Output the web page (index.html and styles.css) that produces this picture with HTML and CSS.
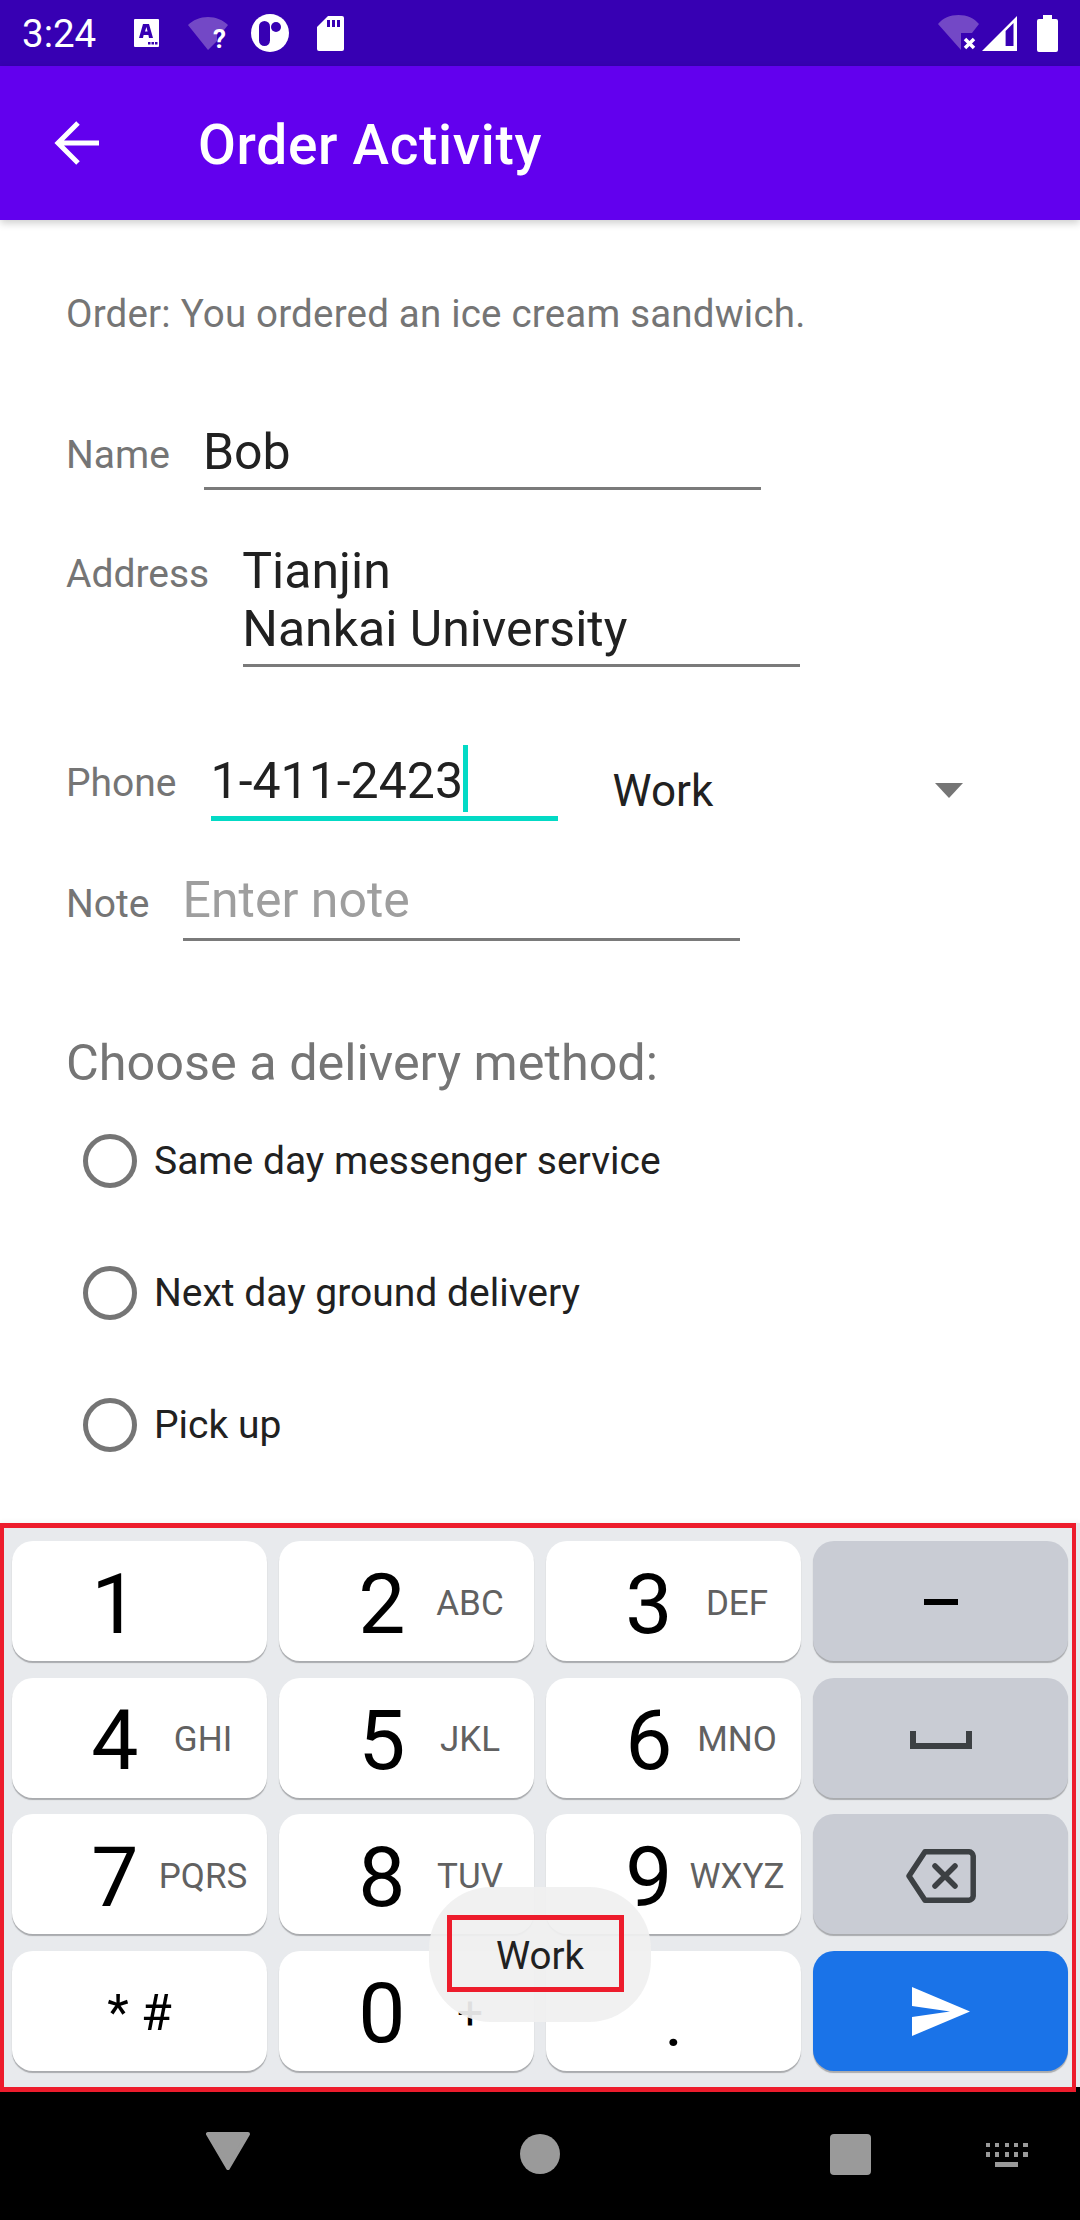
FILE: index.html
```html
<!DOCTYPE html>
<html lang="en">
<head>
<meta charset="utf-8">
<title>Order Activity</title>
<link rel="stylesheet" href="styles.css">
</head>
<body>
<div class="screen">
  <header class="status">
    <span class="time">3:24</span>
    <svg class="si si-a" width="25" height="28" viewBox="0 0 25 28"><path fill="#fff" d="M1 0h23a1 1 0 0 1 1 1v26a1 1 0 0 1-1 1H1a1 1 0 0 1-1-1V1a1 1 0 0 1 1-1z"/><path fill="#3700b3" d="M9 5h6l4 14h-4l-.6-3h-4.800l-.6 3H5zM11 12.500h2.600L12.400 8z"/><rect x="14" y="23" width="2.500" height="2.500" fill="#3700b3"/><rect x="17.500" y="23" width="2.500" height="2.500" fill="#3700b3"/><rect x="21" y="23" width="2.500" height="2.500" fill="#3700b3"/></svg>
    <svg class="si si-w" width="40" height="40" viewBox="0 0 40 40"><path fill="#7348c6" d="M0 8C5 3 12 0 20 0s15 3 20 8l-4 5h-7v11l-9 9z"/><text x="25" y="31" class="q">?</text></svg>
    <svg class="si si-c" width="38" height="38" viewBox="0 0 38 38"><circle cx="19" cy="19" r="19" fill="#fff"/><rect x="8" y="7" width="11" height="25" rx="5.500" fill="#3700b3"/><circle cx="25" cy="13" r="5" fill="#3700b3"/></svg>
    <svg class="si si-s" width="27" height="35" viewBox="0 0 27 35"><path fill="#fff" d="M11 0h14a2 2 0 0 1 2 2v31a2 2 0 0 1-2 2H2a2 2 0 0 1-2-2V11z"/><rect x="10" y="4" width="3" height="7" fill="#3700b3"/><rect x="15" y="4" width="3" height="7" fill="#3700b3"/><rect x="20" y="4" width="3" height="7" fill="#3700b3"/></svg>
    <span class="grow"></span>
    <svg class="si" width="41" height="35" viewBox="0 0 41 35"><path fill="#7348c6" d="M0 9C5 3 12 0 20.500 0S36 3 41 9l-7 9H23v17z"/><path stroke="#fff" stroke-width="3.500" fill="none" d="M27 24l9 9M36 24l-9 9"/></svg>
    <svg class="si si-sig" width="35" height="35" viewBox="0 0 35 35"><path fill="#fff" fill-rule="evenodd" d="M35 0v35H0zM31.500 7l-7.900 8v15h7.900z"/></svg>
    <svg class="si si-bat" width="21" height="37" viewBox="0 0 21 37"><path fill="#fff" d="M6 0h9v4h4a2 2 0 0 1 2 2v29a2 2 0 0 1-2 2H2a2 2 0 0 1-2-2V6a2 2 0 0 1 2-2h4z"/></svg>
  </header>

  <div class="appbar">
    <svg class="back" width="46" height="44" viewBox="0 0 46 44"><path fill="none" stroke="#fff" stroke-width="5" d="M45 22H4M24 2L4 22l20 20"/></svg>
    <h1 class="title">Order Activity</h1>
  </div>

  <main class="content">
    <p class="order">Order: You ordered an ice cream sandwich.</p>

    <div class="field f-name">
      <span class="label">Name</span>
      <div class="input"><span class="val">Bob</span></div>
    </div>

    <div class="field f-addr">
      <span class="label">Address</span>
      <div class="input"><span class="val">Tianjin<br>Nankai University</span></div>
    </div>

    <div class="field f-phone">
      <span class="label">Phone</span>
      <div class="input input-active"><span class="val">1-411-2423</span><span class="caret"></span></div>
      <div class="spinner"><span class="spin-val">Work</span><span class="tri"></span></div>
    </div>

    <div class="field f-note">
      <span class="label">Note</span>
      <div class="input"><span class="val hint">Enter note</span></div>
    </div>

    <h2 class="choose">Choose a delivery method:</h2>
    <div class="radio"><span class="dot"></span><span>Same day messenger service</span></div>
    <div class="radio"><span class="dot"></span><span>Next day ground delivery</span></div>
    <div class="radio"><span class="dot"></span><span>Pick up</span></div>
  </main>

  <section class="kbd-row">
    <div class="kbd">
      <div class="key"><span class="digit">1</span><span class="sub"></span></div>
      <div class="key"><span class="digit">2</span><span class="sub">ABC</span></div>
      <div class="key"><span class="digit">3</span><span class="sub">DEF</span></div>
      <div class="key fn"><span class="minus"></span></div>

      <div class="key"><span class="digit">4</span><span class="sub">GHI</span></div>
      <div class="key"><span class="digit">5</span><span class="sub">JKL</span></div>
      <div class="key"><span class="digit">6</span><span class="sub">MNO</span></div>
      <div class="key fn"><svg class="ic-space" width="62" height="18" viewBox="0 0 62 18"><path fill="none" stroke="#3c4043" stroke-width="6" d="M3 0v15h56V0"/></svg></div>

      <div class="key"><span class="digit">7</span><span class="sub">PQRS</span></div>
      <div class="key"><span class="digit">8</span><span class="sub">TUV</span></div>
      <div class="key"><span class="digit">9</span><span class="sub">WXYZ</span></div>
      <div class="key fn"><svg class="ic-back" width="70" height="54" viewBox="0 0 70 54"><path fill="none" stroke="#3c4043" stroke-width="5.500" stroke-linejoin="round" d="M19 2.800h44a4.500 4.500 0 0 1 4.200 4.200v40a4.500 4.500 0 0 1-4.200 4.200H19L3 27z"/><path fill="none" stroke="#3c4043" stroke-width="5.500" stroke-linecap="round" d="M29 17l20 20M49 17L29 37"/></svg></div>

      <div class="key"><span class="sym">* #</span></div>
      <div class="key"><span class="digit">0</span><span class="sub plus">+</span></div>
      <div class="key"><span class="period">.</span></div>
      <div class="key enter"><svg width="58" height="49" viewBox="0 0 58 49"><path fill="#fff" d="M0 0l58 24.500L0 49V30l38-5.500L0 19z"/></svg></div>
    </div>
    <div class="toast"><div class="toast-box">Work</div></div>
  </section>

  <nav class="navbar">
    <svg width="44" height="38" viewBox="0 0 44 38"><path fill="#9a9a9a" stroke="#9a9a9a" stroke-width="4" stroke-linejoin="round" d="M2 2h40L22 36z"/></svg>
    <svg class="nav-c" width="40" height="40" viewBox="0 0 40 40"><circle cx="20" cy="20" r="20" fill="#9a9a9a"/></svg>
    <svg class="nav-s" width="41" height="41" viewBox="0 0 41 41"><rect width="41" height="41" rx="4" fill="#9a9a9a"/></svg>
    <svg class="nav-k" width="42" height="24" viewBox="0 0 42 24"><g fill="#9a9a9a"><rect x="0" y="0" width="4" height="4"/><rect x="9" y="0" width="4" height="4"/><rect x="19" y="0" width="4" height="4"/><rect x="28" y="0" width="4" height="4"/><rect x="37" y="0" width="5" height="4"/><rect x="0" y="9" width="4" height="5"/><rect x="9" y="9" width="4" height="5"/><rect x="19" y="9" width="4" height="5"/><rect x="28" y="9" width="4" height="5"/><rect x="37" y="9" width="5" height="5"/><rect x="9" y="19" width="23" height="5"/></g></svg>
  </nav>
</div>
</body>
</html>
```
FILE: styles.css
```css
* { box-sizing: border-box; }
html, body { margin: 0; padding: 0; }
body { width: 1080px; height: 2220px; overflow: hidden; background: #fff; font-family: Roboto, "Noto Sans", sans-serif; }
.screen { width: 1080px; height: 2220px; display: flex; flex-direction: column; }

.status { height: 66px; background: #3700b3; display: flex; align-items: flex-start; padding: 0 22px 0 22px; flex: none; overflow: hidden; }
.time { color: #fff; font-size: 38.500px; line-height: 68px; width: 112px; flex: none; }
.si { display: block; flex: none; margin-top: 15px; }
.si-a { margin-top: 19px; margin-right: 29px; }
.si-w { margin-top: 17px; margin-right: 23px; }
.si-c { margin-top: 14px; margin-right: 28px; }
.si-s { margin-top: 16px; }
.si-sig { margin-top: 16px; margin-left: 3px; margin-right: 20px; }
.q { font: 700 26px Roboto, sans-serif; fill: #fff; }
.grow { flex: 1; }

.appbar { height: 154px; background: #6200ee; display: flex; align-items: center; flex: none; box-shadow: 0 3px 8px rgba(0,0,0,.2); position: relative; z-index: 1; }
.back { margin-left: 54px; margin-top: -1px; flex: none; }
.title { margin: 4px 0 0 98px; color: #fff; font-size: 55px; font-weight: 500; line-height: 1; letter-spacing: .69px; }

.content { height: 1303px; flex: none; padding: 0 0 0 66px; color: #757575; }
.order { margin: 0; padding-top: 71px; font-size: 38.500px; line-height: 46px; letter-spacing: .2px; }
.field { display: flex; font-size: 39px; }
.label { line-height: 46px; flex: none; }
.input { border-bottom: 3px solid #7a7a7a; width: 557px; flex: none; }
.val { display: block; color: #212121; font-size: 50px; line-height: 58px; margin-left: -1px; }
.hint { color: #9e9e9e; margin-left: 0; }

.f-name { margin-top: 94px; }
.f-name .label { margin-top: 1px; margin-right: 34px; }
.f-name .input { height: 59px; }
.f-name .val { margin-top: -8px; }

.f-addr { margin-top: 53px; }
.f-addr .label { margin-top: 8px; margin-right: 34px; }
.f-addr .input { height: 124px; }
.f-addr .val { margin-top: -1px; }

.f-phone { margin-top: 78px; align-items: flex-start; }
.f-phone .label { margin-top: 15px; margin-right: 34px; }
.input-active { width: 347px; height: 76px; border-bottom: 5px solid #03dac5; display: flex; padding-left: 1px; }
.input-active .val { margin-top: 7px; }
.caret { width: 5px; height: 67px; background: #03dac5; display: block; flex: none; }
.spinner { display: flex; align-items: center; margin-left: 55px; width: 350px; height: 64px; margin-top: 14px; }
.spin-val { color: #212121; font-size: 44px; flex: 1; }
.tri { width: 0; height: 0; border-left: 14.500px solid transparent; border-right: 14.500px solid transparent; border-top: 15px solid #757575; margin-top: -2px; }

.f-note { margin-top: 51px; }
.f-note .label { margin-top: 7px; margin-right: 33px; }
.f-note .input { height: 67px; }
.f-note .val { margin-top: -3px; }

.choose { margin: 96px 0 0; font-size: 50.400px; font-weight: 400; line-height: 52px; }
.radio { display: flex; align-items: center; color: #212121; font-size: 39px; height: 132px; margin-left: 17px; gap: 17px; }
.choose + .radio { margin-top: 6px; }
.dot { width: 54px; height: 54px; border: 5px solid #757575; border-radius: 50%; display: block; flex: none; }

.kbd-row { height: 564px; width: 1080px; flex: none; position: relative; z-index: 1; background: #e8eaed; box-shadow: 0 -2px 4px rgba(0,0,0,.04); }
.kbd { height: 569px; width: 1076px; border: solid #ed1c2c; border-width: 5px 4px; background: #e8eaed; padding: 13px 8px 0; display: grid; grid-template-columns: repeat(4, 255px); grid-auto-rows: 120px; column-gap: 12px; row-gap: 16.670px; }
.key { background: #fff; border-radius: 21px; box-shadow: 0 2px 1px #a9abae; display: flex; align-items: center; justify-content: center; color: #000; }
.fn { background: #c9ccd4; }
.enter { background: #1a73e8; }
.enter svg { margin-top: 2px; }
.digit { width: 134px; padding-right: 7.500px; padding-top: 7px; text-align: right; font-size: 84px; font-weight: 375; line-height: 1; flex: none; }
.sub { width: 121px; padding-right: 7px; padding-top: 4px; text-align: center; font-size: 35px; color: #616161; flex: none; }
.plus { color: #000; font-size: 46px; padding-top: 4px; }
.sym { font-size: 50px; line-height: 1; margin-top: 4px; }
.period { font-size: 50px; line-height: 1; margin-top: 36px; font-weight: 700; }
.minus { display: block; width: 34px; height: 6px; background: #000; margin-top: 2px; }
.ic-space, .ic-back { margin-top: 4px; }
.toast { position: absolute; left: 429px; top: 364px; width: 222px; height: 135px; border-radius: 62px; background: rgba(240,240,240,.93); padding: 28px 0 0 18px; }
.toast-box { width: 177px; height: 77px; border: 5px solid #ed1c2c; padding-left: 9px; padding-top: 3px; display: flex; align-items: center; justify-content: center; font-size: 38.500px; color: #212121; }

.navbar { height: 133px; flex: none; background: #000; display: flex; align-items: flex-start; padding: 45px 0 0 206px; }
.nav-c { margin-left: 270px; margin-top: 2px; }
.nav-s { margin-left: 270px; margin-top: 2px; }
.nav-k { margin-left: 115px; margin-top: 11px; }
```
